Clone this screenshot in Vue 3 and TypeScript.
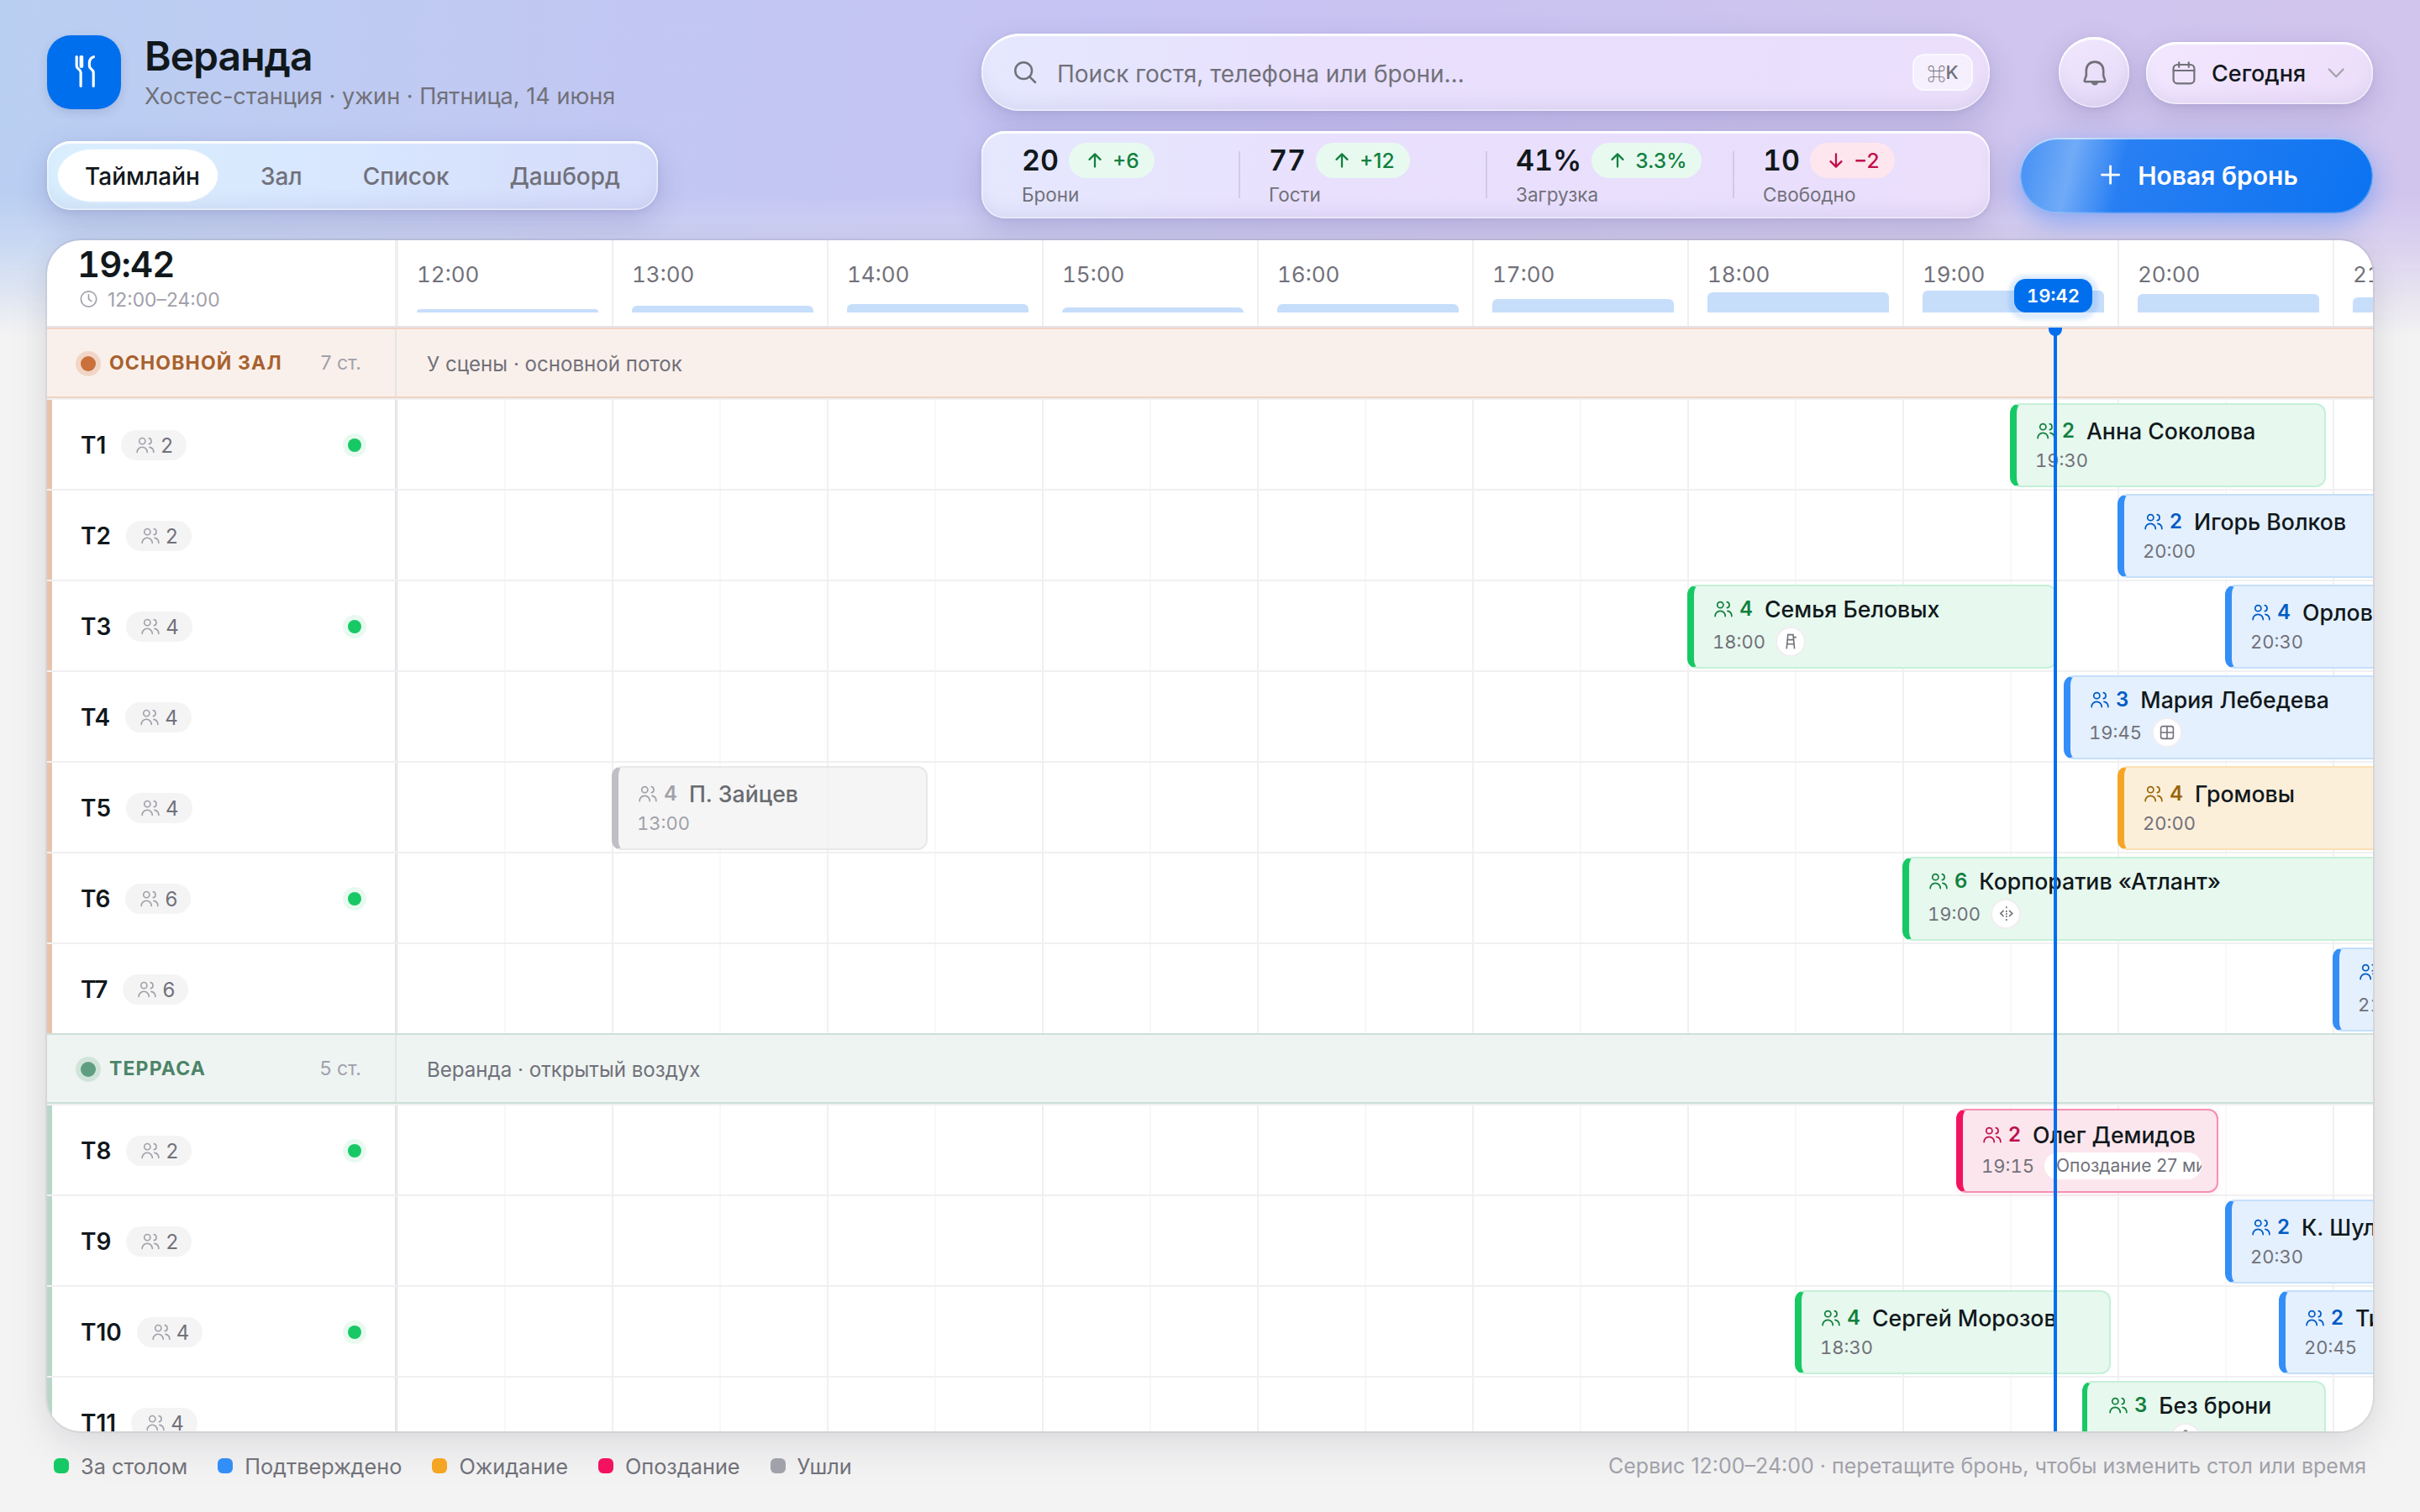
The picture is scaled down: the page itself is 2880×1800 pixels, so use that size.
<script setup lang="ts">
type Status = 'seated' | 'confirmed' | 'waiting' | 'late' | 'left'
type Badge = 'chair' | 'window' | 'split' | 'walk'

interface Booking {
  start: string
  minutes: number
  guests: number
  name: string
  status: Status
  badge?: Badge
  note?: string
  walkIn?: boolean
}
interface TableRow { name: string; seats: number; busy?: boolean; bookings: Booking[] }
interface Zone { key: string; title: string; count: string; hint: string; tables: TableRow[] }

const HOUR_WIDTH = 256
const OPEN_HOUR = 12

function offset(time: string): number {
  const [h, m] = time.split(':').map(Number)
  return (h - OPEN_HOUR + m / 60) * HOUR_WIDTH
}
function place(b: Booking) {
  return { left: `${Math.ceil(offset(b.start))}px`, width: `${Math.floor((b.minutes / 60) * HOUR_WIDTH) - 8}px` }
}

const tabs = ['Таймлайн', 'Зал', 'Список', 'Дашборд']

const stats = [
  { value: '20', delta: '+6', label: 'Брони', up: true },
  { value: '77', delta: '+12', label: 'Гости', up: true },
  { value: '41%', delta: '3.3%', label: 'Загрузка', up: true },
  { value: '10', delta: '−2', label: 'Свободно', up: false },
]

const hours = [
  { label: '12:00', load: 4 },
  { label: '13:00', load: 8 },
  { label: '14:00', load: 10 },
  { label: '15:00', load: 6 },
  { label: '16:00', load: 10 },
  { label: '17:00', load: 16 },
  { label: '18:00', load: 24 },
  { label: '19:00', load: 26 },
  { label: '20:00', load: 22 },
  { label: '21:00', load: 18 },
]

const zones: Zone[] = [
  {
    key: 'main', title: 'Основной зал', count: '7 ст.', hint: 'У сцены · основной поток',
    tables: [
      { name: 'T1', seats: 2, busy: true, bookings: [{ start: '19:30', minutes: 90, guests: 2, name: 'Анна Соколова', status: 'seated' }] },
      { name: 'T2', seats: 2, bookings: [{ start: '20:00', minutes: 90, guests: 2, name: 'Игорь Волков', status: 'confirmed' }] },
      {
        name: 'T3', seats: 4, busy: true, bookings: [
          { start: '18:00', minutes: 105, guests: 4, name: 'Семья Беловых', status: 'seated', badge: 'chair' },
          { start: '20:30', minutes: 90, guests: 4, name: 'Орловы', status: 'confirmed' },
        ],
      },
      { name: 'T4', seats: 4, bookings: [{ start: '19:45', minutes: 105, guests: 3, name: 'Мария Лебедева', status: 'confirmed', badge: 'window' }] },
      {
        name: 'T5', seats: 4, bookings: [
          { start: '13:00', minutes: 90, guests: 4, name: 'П. Зайцев', status: 'left' },
          { start: '20:00', minutes: 90, guests: 4, name: 'Громовы', status: 'waiting' },
        ],
      },
      { name: 'T6', seats: 6, busy: true, bookings: [{ start: '19:00', minutes: 150, guests: 6, name: 'Корпоратив «Атлант»', status: 'seated', badge: 'split' }] },
      { name: 'T7', seats: 6, bookings: [{ start: '21:00', minutes: 120, guests: 5, name: 'Юбилей', status: 'confirmed', badge: 'chair' }] },
    ],
  },
  {
    key: 'terrace', title: 'Терраса', count: '5 ст.', hint: 'Веранда · открытый воздух',
    tables: [
      { name: 'T8', seats: 2, busy: true, bookings: [{ start: '19:15', minutes: 75, guests: 2, name: 'Олег Демидов', status: 'late', note: 'Опоздание 27 мин' }] },
      { name: 'T9', seats: 2, bookings: [{ start: '20:30', minutes: 90, guests: 2, name: 'К. Шульц', status: 'confirmed' }] },
      {
        name: 'T10', seats: 4, busy: true, bookings: [
          { start: '18:30', minutes: 90, guests: 4, name: 'Сергей Морозов', status: 'seated' },
          { start: '20:45', minutes: 90, guests: 2, name: 'Тимур', status: 'confirmed' },
        ],
      },
      { name: 'T11', seats: 4, bookings: [{ start: '19:50', minutes: 70, guests: 3, name: 'Без брони', status: 'seated', badge: 'walk', walkIn: true }] },
    ],
  },
]

const legend: { status: Status; label: string }[] = [
  { status: 'seated', label: 'За столом' },
  { status: 'confirmed', label: 'Подтверждено' },
  { status: 'waiting', label: 'Ожидание' },
  { status: 'late', label: 'Опоздание' },
  { status: 'left', label: 'Ушли' },
]
</script>

<template>
  <div class="page">
    <div class="aurora"></div>

    <header class="top">
      <div class="brand">
        <div class="logo">
          <svg viewBox="0 0 88 88" fill="none" stroke="#fff" stroke-width="3.2" stroke-linecap="round" stroke-linejoin="round">
            <path d="M35.2 25.6v11.2c0 3.6 4.9 3.4 4.9 7.4v16.2" />
            <path d="M40.2 25.6v11.6M41.6 25.6v11.6" />
            <path d="M55.4 25.7c-3.2 1-5 4-5 7.2v3.6c0 4.2 4.8 3.4 4.8 8.2v15.7" />
          </svg>
        </div>
        <div class="brand-text">
          <h1>Веранда</h1>
          <p>Хостес-станция · ужин · Пятница, 14 июня</p>
        </div>
      </div>

      <label class="search glass">
        <svg viewBox="0 0 24 24" class="i32" fill="none" stroke="currentColor" stroke-width="1.9" stroke-linecap="round">
          <circle cx="10.6" cy="10.6" r="7.4" /><path d="M16.2 16.2 21 21" />
        </svg>
        <span class="search-text">Поиск гостя, телефона или брони…</span>
        <kbd><span class="cmd">⌘</span>K</kbd>
      </label>

      <div class="actions">
        <button class="bell glass">
          <svg viewBox="0 0 36 36" fill="none" stroke="currentColor" stroke-width="2.6" stroke-linejoin="round">
            <path d="M18 4.6c-6 0-10.2 4.4-10.2 10.2v6.2l-2 5.6c-.3 1 .2 1.6 1 1.6h22.4c.8 0 1.3-.6 1-1.6l-2-5.6v-6.2C28.2 9 24 4.6 18 4.6z" />
            <path d="M14.2 29.4c.6 1.800 2 2.600 3.800 2.600s3.200-.8 3.800-2.600z" fill="currentColor" stroke-width="1" />
          </svg>
        </button>
        <button class="today glass">
          <svg viewBox="0 0 32 32" class="i32" fill="none" stroke="currentColor" stroke-width="2.2" stroke-linecap="round">
            <rect x="3.6" y="6" width="24.8" height="22.4" rx="4.6" /><path d="M3.6 13h24.8M10.2 3.4v5.4M21.800 3.400v5.400" />
          </svg>
          <span>Сегодня</span>
          <svg viewBox="0 0 24 24" class="chev" fill="none" stroke="#a1a1aa" stroke-width="2" stroke-linecap="round" stroke-linejoin="round">
            <path d="m4.4 7.8 7.800 8.200 7.800-8.200" />
          </svg>
        </button>
      </div>

      <nav class="tabs glass">
        <span class="cursor"></span>
        <a v-for="(t, i) in tabs" :key="t" :class="{ active: i === 0 }">{{ t }}</a>
      </nav>

      <section class="stats glass">
        <div v-for="s in stats" :key="s.label" class="stat">
          <div class="stat-top">
            <b>{{ s.value }}</b>
            <span class="delta" :class="{ down: !s.up }">
              <svg viewBox="0 0 24 24" class="i26" fill="none" stroke="currentColor" stroke-width="2.1" stroke-linecap="round" stroke-linejoin="round">
                <path v-if="s.up" d="M12 19V5M6 11l6-6 6 6" />
                <path v-else d="M12 5v14M6 13l6 6 6-6" />
              </svg>
              {{ s.delta }}
            </span>
          </div>
          <small>{{ s.label }}</small>
        </div>
      </section>

      <button class="create">
        <span class="sheen"></span>
        <svg viewBox="0 0 32 32" fill="none" stroke="currentColor" stroke-width="2.5" stroke-linecap="round"><path d="M16.500 6.200v18M7.500 15.200h18" /></svg>
        <span>Новая бронь</span>
      </button>
    </header>

    <main class="board">
      <div class="head">
        <div class="clock">
          <b>19:42</b>
          <span class="range">
            <svg viewBox="0 0 24 24" fill="none" stroke="currentColor" stroke-width="1.7" stroke-linecap="round" stroke-linejoin="round"><circle cx="11.5" cy="12" r="9.2" /><path d="M11.500 6.800V12l3.400 2.600" /></svg>
            12:00–24:00
          </span>
        </div>
        <div class="hours">
          <div v-for="h in hours" :key="h.label" class="hour">
            <span>{{ h.label }}</span>
            <i :style="{ height: h.load + 'px' }"></i>
          </div>
          <div class="now-badge">19:42</div>
        </div>
      </div>

      <div class="body">
        <section v-for="z in zones" :key="z.key" class="zone" :class="z.key">
          <div class="zone-head">
            <div class="zone-label">
              <i></i><b>{{ z.title }}</b><span>{{ z.count }}</span>
            </div>
            <div class="zone-hint">{{ z.hint }}</div>
          </div>
          <div v-for="t in z.tables" :key="t.name" class="row">
            <div class="row-label">
              <b>{{ t.name }}</b>
              <span class="seats">
                <svg viewBox="0 0 24 24" class="i26" fill="none" stroke="currentColor" stroke-width="1.5" stroke-linecap="round">
                  <circle cx="8.6" cy="7.5" r="3.3" /><path d="M2.900 19.900c0-3.300 2.400-5.800 5.600-5.800s5.600 2.500 5.600 5.800M16 4.300c1.600.3 2.500 1.600 2.500 3.200s-.9 2.900-2.500 3.200M16.600 14.200c2.600.5 4.500 2.800 4.500 5.700" />
                </svg>
                {{ t.seats }}
              </span>
              <i v-if="t.busy" class="busy"></i>
            </div>
            <div class="lane">
              <article v-for="b in t.bookings" :key="b.start" class="booking" :class="[b.status, { walk: b.walkIn }]" :style="place(b)">
                <div class="line1">
                  <svg viewBox="0 0 24 24" class="i26" fill="none" stroke="currentColor" stroke-width="1.6" stroke-linecap="round">
                    <circle cx="8.6" cy="7.5" r="3.3" /><path d="M2.900 19.900c0-3.300 2.400-5.800 5.600-5.800s5.600 2.500 5.600 5.800M16 4.300c1.600.3 2.500 1.600 2.500 3.200s-.9 2.900-2.500 3.200M16.600 14.200c2.600.5 4.500 2.800 4.500 5.700" />
                  </svg>
                  <b>{{ b.guests }}</b>
                  <strong>{{ b.name }}</strong>
                </div>
                <div class="line2">
                  <time>{{ b.start }}</time>
                  <span v-if="b.badge" class="badge">
                    <svg viewBox="-12 -12 24 24" fill="none" stroke="currentColor" stroke-width="1.6">
                      <path v-if="b.badge === 'chair'" d="M-4.800 8.400-3.200-8.400h6.200L4.600 8.400M-3.800-2.400h7.200M-4.200 2.800h8.200M3-5.400h3.800" />
                      <path v-else-if="b.badge === 'window'" d="M-5-7.400H5a2.400 2.400 0 0 1 2.400 2.400V5A2.400 2.400 0 0 1 5 7.400H-5A2.400 2.400 0 0 1-7.400 5V-5A2.400 2.400 0 0 1-5-7.400zM0-7.400V7.400M-7.400 0H7.400" />
                      <path v-else-if="b.badge === 'split'" d="M.8-8.800v2M.8-4v2M.8-1v2M.8 2v2M.8 6v2M-2.400-4.200-6.200-.6-2.400 3M4-4.200 7.800-.6 4 3" />
                      <path v-else d="M0-9a1.800 1.800 0 1 1-.1 0M-1-4l-3 4M-1-4l1 6 3 6M0 2l-3 6M-1-4l4 4" />
                    </svg>
                  </span>
                  <span v-if="b.note" class="note">{{ b.note }}</span>
                </div>
              </article>
            </div>
          </div>
        </section>
        <div class="now-line"></div>
      </div>
    </main>

    <footer class="foot">
      <span v-for="l in legend" :key="l.status" class="key"><i :class="l.status"></i>{{ l.label }}</span>
      <span class="tip">Сервис 12:00–24:00 · перетащите бронь, чтобы изменить стол или время</span>
    </footer>
  </div>
</template>

<style>
html, body { margin: 0; background: #f3f3f3; }
</style>

<style scoped>
.page {
  position: relative;
  width: 2880px;
  height: 1800px;
  overflow: hidden;
  box-sizing: border-box;
  padding: 40px 56px 0;
  background: #f3f3f3;
  color: #11181c;
  font-family: Inter, "Noto Sans", sans-serif;
}
.page * { box-sizing: border-box; }
h1, p { margin: 0; }
b, strong { font-weight: 600; }
i { font-style: normal; }
button, kbd { font-family: inherit; border: 0; padding: 0; }
svg { display: block; flex: none; }
.i32 { width: 32px; height: 32px; }
.i26 { width: 26px; height: 26px; }

.aurora {
  position: absolute;
  inset: 0 0 auto;
  height: 400px;
  background: linear-gradient(94deg, #b9cff2 0%, #bfcbf2 14%, #c3c6f3 32%, #c9c3f2 55%, #cec5ef 75%, #d1c5ed 100%);
  -webkit-mask-image: linear-gradient(#000 58%, rgba(0, 0, 0, .75) 72%, transparent);
  mask-image: linear-gradient(#000 58%, rgba(0, 0, 0, .75) 72%, transparent);
}

.top {
  position: relative;
  display: grid;
  grid-template-columns: 1112px 1200px 1fr;
  grid-template-rows: 92px 104px;
  row-gap: 24px;
  align-items: center;
}
.glass {
  color: #71717a;
  background: linear-gradient(100deg, #e5e8fe, #e9e0fe 35%, #e9dffd 80%, #ebdffb);
  box-shadow:
    inset 0 3px 1px rgba(255, 255, 255, .9),
    inset 0 0 0 1.5px rgba(255, 255, 255, .55),
    inset 0 -14px 20px -8px rgba(120, 110, 170, .14),
    0 12px 36px rgba(70, 60, 130, .2),
    0 2px 6px rgba(70, 60, 130, .08);
}

.brand { display: flex; align-items: center; gap: 28px; }
.logo { width: 88px; height: 88px; border-radius: 28px; background: #006fee; box-shadow: 0 4px 12px rgba(40, 40, 90, .14); }
.brand-text h1 { margin-bottom: 3px; font-size: 48px; line-height: 54px; font-weight: 600; letter-spacing: -.96px; }
.brand-text p { font-size: 27.1px; line-height: 36px; color: #71717a; }

.search { display: flex; align-items: center; height: 92px; border-radius: 46px; padding: 0 20px 0 36px; }
.search-text { margin: 3px 0 0 22px; font-size: 28px; flex: 1; }
kbd { display: flex; align-items: center; justify-content: center; width: 72px; height: 44px; border-radius: 14px; background: rgba(255, 255, 255, .5); border: 2px solid rgba(255, 255, 255, .55); font-size: 22px; line-height: 30px; font-weight: 500; }
.cmd { font-family: "Noto Sans CJK SC", sans-serif; font-weight: 400; line-height: 30px; }

.actions { display: flex; justify-content: flex-end; align-items: center; gap: 20px; }
.bell { width: 84px; height: 84px; border-radius: 42px; display: grid; place-items: center; background: linear-gradient(150deg, #f1e8fe, #e4d9f8); }
.bell svg { width: 36px; height: 36px; margin: 2px 0 0 1px; }
.today { width: 270px; height: 74px; margin-top: 2px; border-radius: 36px; display: flex; align-items: center; padding-left: 29px; background: linear-gradient(120deg, #f1e7fe, #f0e1fd 60%, #ecdffa); }
.today > span { margin-left: 17px; font-size: 27px; font-weight: 500; color: #11181c; }
.chev { width: 26px; height: 26px; margin-left: 23px; }

.tabs { position: relative; justify-self: start; display: flex; align-items: center; gap: 8px; height: 82px; margin-top: 2px; padding: 0 13px; border-radius: 28px; background: linear-gradient(100deg, #d9effe, #d8e6fe 50%, #d5dbfa); }
.tabs a { position: relative; padding: 2px 32px 0; font-size: 28px; font-weight: 500; color: #71717a; }
.tabs a.active { color: #11181c; }
.cursor { position: absolute; left: 13px; top: 10px; width: 190px; height: 62px; border-radius: 42px / 31px; background: #fff; box-shadow: 0 0 2px rgba(255, 255, 255, .9); }

.stats { display: grid; grid-template-columns: repeat(4, 294px); align-items: center; height: 104px; padding: 0 12px; border-radius: 28px; }
.stat { position: relative; padding-left: 36px; height: 104px; padding-top: 14px; }
.stat + .stat::before { content: ""; position: absolute; left: 0; top: 24px; width: 2px; height: 56px; background: rgba(110, 100, 150, .18); }
.stat-top { display: flex; align-items: center; gap: 12px; height: 42px; }
.stat b { font-size: 34px; line-height: 40px; margin-top: -1px; color: #11181c; font-feature-settings: "tnum"; }
.delta { display: flex; align-items: center; gap: 8px; height: 42px; padding: 0 18px; border-radius: 21px; background: #e8faf0; color: #12803f; font-size: 24.5px; font-weight: 500; }
.delta.down { background: #fde6ed; color: #c20e4d; }
.stat small { display: block; margin-top: 5px; font-size: 22.5px; line-height: 30px; }

.create { position: relative; overflow: hidden; justify-self: end; display: flex; align-items: center; justify-content: center; width: 420px; height: 90px; margin-top: 2px; border-radius: 45px; color: #fff; font-size: 30px; font-weight: 600; background: linear-gradient(115deg, #3487f4, #267ef3 35%, #0b73f1); box-shadow: inset 0 2px 1px rgba(255, 255, 255, .55), inset 0 0 0 1.5px rgba(255, 255, 255, .25), 0 10px 32px rgba(40, 120, 245, .45); }
.create svg { position: relative; width: 36px; height: 36px; margin-right: 15px; }
.create > span { position: relative; }
.create .sheen { position: absolute; left: -30px; top: 0; width: 150px; height: 90px; transform: skewX(-13deg); background: linear-gradient(90deg, transparent, rgba(255, 255, 255, .32) 58%, transparent); }

.board { position: relative; margin-top: 26px; height: 1418px; border-radius: 40px; background: #fff; overflow: hidden; }
.page::after { content: ""; position: absolute; pointer-events: none; left: 56px; top: 286px; width: 2768px; height: 1418px; border-radius: 40px; box-shadow: 0 0 0 2px rgba(20, 20, 40, .06), 0 0 36px rgba(0, 0, 0, .05), 0 20px 50px rgba(20, 30, 60, .08); }

.head { display: flex; height: 104px; border-bottom: 2px solid #e4e4e7; }
.clock { width: 416px; flex: none; padding: 8px 0 0 38px; border-right: 2px solid #efeff0; }
.clock b { display: block; margin-left: -2px; font-size: 42px; line-height: 42px; letter-spacing: -.9px; font-feature-settings: "tnum"; }
.range { display: flex; align-items: center; gap: 9px; margin-top: 6px; height: 28px; font-size: 22.8px; color: #a1a1aa; }
.range svg { width: 24px; height: 24px; margin-right: 1px; }
.hours { position: relative; display: flex; }
.hour { position: relative; flex: none; width: 256px; border-left: 2px solid #efeff0; padding: 25px 16px 16px 22px; display: flex; flex-direction: column; justify-content: space-between; font-size: 26px; line-height: 32px; color: #71717a; font-feature-settings: "tnum"; }
.hour i { border-radius: 6px 6px 0 0; background: #c7defb; margin-top: -20px; }
.now-badge { position: absolute; left: 1925px; top: 46px; width: 93px; height: 40px; border-radius: 14px; background: #006fee; color: #fff; font-size: 22px; line-height: 40px; font-weight: 600; text-align: center; font-feature-settings: "tnum"; box-shadow: 0 2px 4px 7px rgba(0, 111, 238, .13); }

.body { position: relative; }
.zone-head { display: flex; height: 84px; }
.zone-head > div { border-top: 2px solid; border-bottom: 2px solid; display: flex; align-items: center; }
.zone-label { width: 416px; padding: 0 42px 0 40px; position: relative; }
.zone-label::after { content: ""; position: absolute; right: 0; top: 0; bottom: 0; width: 2px; background: #e4e4e7; }
.zone-label i { width: 18px; height: 18px; border-radius: 9px; margin-top: 2px; }
.zone-label b { margin-left: 16px; font-size: 23px; font-weight: 700; letter-spacing: 1.15px; text-transform: uppercase; }
.zone-label span { margin-left: auto; font-size: 23px; color: #a1a1aa; }
.zone-hint { flex: 1; padding: 2px 0 0 36px; font-size: 24.1px; color: #71717a; }
.main .zone-head > div { background: #faf0eb; border-color: #f0d3c3; }
.main .zone-label i { background: #c9703b; box-shadow: 0 0 0 6px #f1d6c7; }
.main .zone-label b { color: #a8612f; }
.terrace .zone-head > div { background: #eef4f2; border-color: #cde0d6; }
.terrace .zone-label i { background: #609e80; box-shadow: 0 0 0 6px #d1e4da; }
.terrace .zone-label b { color: #4c8467; }

.row { display: flex; height: 108px; border-top: 2px solid #f0f0f2; }
.row-label { width: 416px; flex: none; display: flex; align-items: center; padding: 2px 40px 0 34px; border-left: 6px solid; border-right: 2px solid #e4e4e7; }
.main .row-label { border-left-color: #e8c3ac; }
.terrace .row-label { border-left-color: #bad6c9; }
.row-label b { font-size: 28px; }
.seats { display: flex; align-items: center; gap: 5px; height: 36px; margin-left: 18px; padding: 0 16px; border-radius: 18px; background: #f4f4f5; color: #71717a; font-size: 24px; }
.seats svg { color: #a1a1aa; }
.busy { width: 16px; height: 16px; margin-left: auto; border-radius: 8px; background: #17c964; box-shadow: 0 0 0 6px #e8faf0; }
.lane {
  position: relative;
  flex: 1;
  background:
    repeating-linear-gradient(90deg, #f0f0f2 0 2px, transparent 2px 256px),
    repeating-linear-gradient(90deg, transparent 0 128px, #f8f8f9 128px 130px, transparent 130px 256px);
}
.booking { position: absolute; top: 4px; height: 100px; display: flex; flex-direction: column; justify-content: center; gap: 6px; padding: 0 18px 0 22px; border: 2px solid; border-left-width: 8px; border-radius: 12px; overflow: hidden; white-space: nowrap; }
.booking.walk { border-left-width: 6px; padding-left: 24px; }
.line1 { display: flex; align-items: center; height: 30px; }
.line1 b { margin-left: 6px; font-size: 24px; line-height: 30px; }
.line1 strong { margin-left: 14px; font-size: 26.7px; line-height: 30px; font-weight: 500; color: #11181c; }
.line2 { display: flex; align-items: center; gap: 12px; min-height: 28px; color: #71717a; }
.line2 time { font-size: 22px; line-height: 28px; font-feature-settings: "tnum"; }
.badge { display: grid; place-items: center; width: 36px; height: 36px; border-radius: 18px; background: #fff; border: 2px solid #f0eef2; }
.badge svg { width: 24px; height: 24px; }
.note { flex: 0 1 auto; min-width: 0; overflow: hidden; height: 32px; line-height: 32px; padding-left: 14px; border-radius: 16px; background: #fff; font-size: 21px; }
.booking.seated { background: #e7f8ee; border-color: #c5f0d8 #c5f0d8 #c5f0d8 #17c964; color: #12803f; }
.booking.confirmed { background: #e4f0fd; border-color: #c4dffb #c4dffb #c4dffb #338ef7; color: #005bc4; }
.booking.waiting { background: #fcefda; border-color: #fbe0b2 #fbe0b2 #fbe0b2 #f5a524; color: #9a6508; }
.booking.late { background: #fce6ed; border-color: #f78fb3 #f78fb3 #f78fb3 #f31260; color: #c20e4d; box-shadow: 0 2px 8px rgba(243, 18, 96, .08); }
.booking.left { background: rgba(242, 242, 243, .8); border-color: #e8e8ea #e8e8ea #e8e8ea #bfbfc5; color: #a1a1aa; }
.booking.left strong { color: #696b70; }
.booking.left .line2 { color: #a1a1aa; }

.now-line { position: absolute; left: 2388px; top: 0; width: 4px; height: 1314px; background: #006fee; }
.now-line::before { content: ""; position: absolute; left: -6px; top: 0; width: 16px; height: 10px; border-radius: 0 0 8px 8px; background: #006fee; }

.foot { position: relative; z-index: 1; display: flex; align-items: center; height: 32px; margin-top: 25px; padding: 0 8px; font-size: 25px; color: #71717a; }
.key { display: flex; align-items: center; margin-right: 36px; font-size: 25.300px; }
.key i { width: 18px; height: 18px; margin-right: 14px; border-radius: 6px; }
.key i.seated { background: #17c964; }
.key i.confirmed { background: #338ef7; }
.key i.waiting { background: #f5a524; }
.key i.late { background: #f31260; }
.key i.left { background: #a1a1aa; }
.tip { margin-left: auto; color: #a1a1aa; }
</style>
